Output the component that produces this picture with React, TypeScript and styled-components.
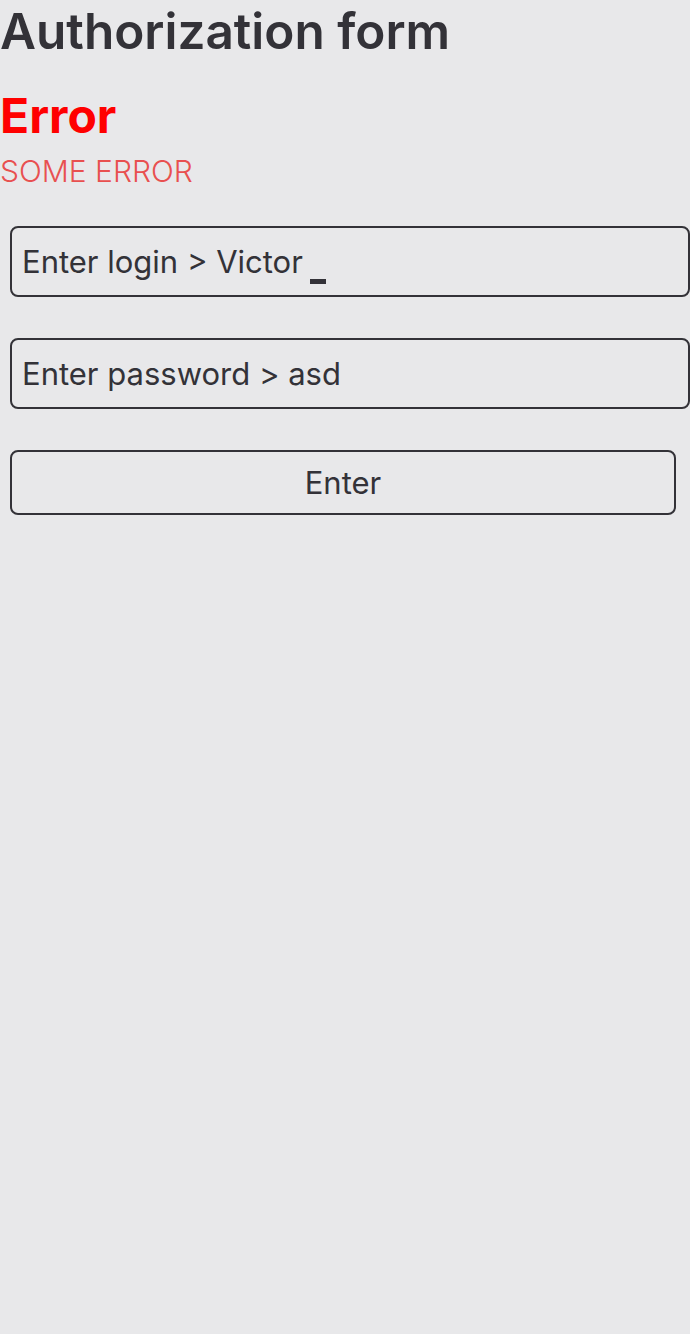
import styled, { createGlobalStyle } from 'styled-components';

const GlobalStyle = createGlobalStyle`
  html, body {
    margin: 0;
    padding: 0;
    background: #e8e8ea;
  }
  body {
    font-family: Inter, "Noto Sans", sans-serif;
    color: #333238;
  }
`;

const Page = styled.div`
  width: 690px;
  min-height: 1334px;
  overflow: hidden;
`;

const Title = styled.h1`
  margin: 0;
  font-size: 49.5px;
  line-height: 62px;
  font-weight: 600;
  color: #333238;
`;

const ErrorTitle = styled.h2`
  margin: 28px 0 0;
  font-size: 48px;
  line-height: 52px;
  font-weight: 700;
  color: #ff0000;
`;

const ErrorText = styled.div`
  margin-top: 9px;
  font-size: 30px;
  line-height: 40px;
  font-weight: 300;
  color: #e85050;
`;

const Form = styled.form`
  display: flex;
  flex-direction: column;
  gap: 41px;
  padding: 35px 0 0 10px;
`;

const Field = styled.div<{ $width: number }>`
  box-sizing: border-box;
  width: ${({ $width }) => $width}px;
  height: ${({ $width }) => ($width > 670 ? 71 : 65)}px;
  border: 2px solid #333238;
  border-radius: 8px;
  display: flex;
  align-items: center;
  padding: 0 10px;
  font-family: Inter, "Noto Sans", sans-serif;
  font-size: 31px;
  color: #333238;
  background: transparent;
`;

const ButtonField = styled(Field)`
  justify-content: center;
  cursor: pointer;
`;

const Cursor = styled.span`
  display: inline-block;
  align-self: flex-start;
  width: 16px;
  height: 5px;
  background: #333238;
  margin: 51px 0 0 7px;
`;

export default function App() {
  return (
    <Page>
      <GlobalStyle />
      <Title>Authorization form</Title>
      <ErrorTitle>Error</ErrorTitle>
      <ErrorText>SOME ERROR</ErrorText>
      <Form onSubmit={(e) => e.preventDefault()}>
        <Field $width={680}>
          Enter login &gt; Victor
          <Cursor />
        </Field>
        <Field $width={680}>Enter password &gt; asd</Field>
        <ButtonField as="button" type="submit" $width={666}>
          Enter
        </ButtonField>
      </Form>
    </Page>
  );
}
